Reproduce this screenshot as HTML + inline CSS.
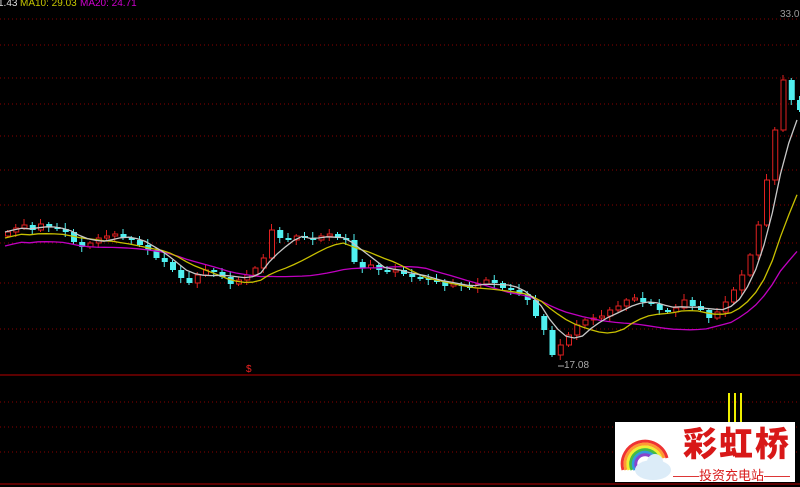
<!DOCTYPE html>
<html><head><meta charset="utf-8"><style>
html,body{margin:0;padding:0;background:#000;width:800px;height:487px;overflow:hidden;font-family:"Liberation Sans",sans-serif}
.t{position:absolute;font-size:10px;top:-2px}
#logo{position:absolute;left:615px;top:422px;width:180px;height:60px;background:#fff}
</style></head><body>
<svg id="s" width="800" height="487" style="position:absolute;left:0;top:0"></svg>
<div class="t" style="left:-2px;color:#ddd">1.43</div>
<div class="t" style="left:20px;color:#c8c800">MA10: 29.03</div>
<div class="t" style="left:80px;color:#d000d0">MA20: 24.71</div>
<div class="t" style="left:780px;top:9px;color:#999">33.0</div>
<div class="t" style="left:564px;top:360px;color:#aaa">17.08</div>
<div class="t" style="left:246px;top:364px;color:#e22">$</div>
<div id="logo">
<svg width="60" height="60" style="position:absolute;left:0;top:0">
<g fill="none" stroke-width="3">
<path d="M8 48 A22 22 0 1 1 52 36" stroke="#e33"/>
<path d="M11 48 A19 19 0 1 1 49 36" stroke="#f93"/>
<path d="M14 48 A16 16 0 1 1 46 36" stroke="#ee3"/>
<path d="M17 48 A13 13 0 1 1 43 36" stroke="#4b4"/>
<path d="M20 48 A10 10 0 1 1 40 36" stroke="#39d"/>
<path d="M23 48 A7 7 0 1 1 37 36" stroke="#84c"/>
</g>
<ellipse cx="38" cy="48" rx="18" ry="10" fill="#dcecf8"/>
<circle cx="40" cy="40" r="8" fill="#dcecf8"/>
</svg>
<div style="position:absolute;left:68px;top:0px;font:900 34px 'Noto Sans CJK SC',sans-serif;color:#d81818;letter-spacing:2px;line-height:40px">彩虹桥</div>
<div style="position:absolute;left:58px;top:43px;font:13px 'Liberation Sans','Noto Sans CJK SC',sans-serif;color:#d81818;white-space:nowrap">——投资充电站——</div>
</div>
<script>
(function(){
var s=document.getElementById('s'),NS='http://www.w3.org/2000/svg';
function el(t,a){var e=document.createElementNS(NS,t);for(var k in a)e.setAttribute(k,a[k]);s.appendChild(e);return e;}
var gl=[19,45,78,104,136,170,205,243,283,329,402,427,452];
gl.forEach(function(y){el('line',{x1:0,y1:y,x2:800,y2:y,stroke:'#8a0000','stroke-dasharray':'1,3'});});
el('line',{x1:0,y1:375,x2:800,y2:375,stroke:'#7a0000','stroke-width':1.5});
el('line',{x1:0,y1:484,x2:800,y2:484,stroke:'#7a0000','stroke-width':1.5});
var c=[232,228,225,230,224,227,229,232,242,247,243,238,236,234,238,240,245,250,258,262,270,278,283,275,270,272,277,284,280,275,268,258,230,238,240,236,238,240,236,234,238,240,262,268,265,270,272,270,274,277,278,280,282,286,284,286,288,284,280,283,288,290,294,300,316,330,355,345,335,325,320,318,316,310,306,300,298,302,304,310,312,308,300,306,310,318,312,302,290,275,255,225,180,130,80,100,110];
var n=c.length,dx=8.25;
function ma(k,off){var p='';for(var i=0;i<n;i++){var a=0,m=0;for(var j=Math.max(0,i-k+1);j<=i;j++){a+=c[j];m++;}a=a/m+(i<88?off:off*Math.max(0,(94-i)/6));p+=(i?'L':'M')+(5+i*dx).toFixed(1)+' '+a.toFixed(1);}return p;}
for(var i=0;i<n;i++){var x=5+i*dx,o=i?c[i-1]:c[0]+4,cl=c[i];var tp=Math.min(o,cl),bt=Math.max(o,cl);if(bt-tp<2)bt=tp+2;
var up=cl<o,col=up?'#e02020':'#50f0f0',w1=((i*7)%5)+2,w2=((i*3)%6)+2;
el('line',{x1:x+2.5,y1:tp-w1,x2:x+2.5,y2:bt+w2,stroke:col});
if(up)el('rect',{x:x+0.5,y:tp,width:5,height:bt-tp,fill:'#000',stroke:col});
else el('rect',{x:x,y:tp,width:6,height:bt-tp,fill:col});}
el('path',{d:ma(20,14),fill:'none',stroke:'#c000c0','stroke-width':1.3});
el('path',{d:ma(10,6),fill:'none',stroke:'#c8c000','stroke-width':1.3});
el('path',{d:ma(5,0),fill:'none',stroke:'#c8c8c8','stroke-width':1.3});
el('line',{x1:558,y1:366,x2:564,y2:366,stroke:'#aaa'});
[729,735,741].forEach(function(x){el('line',{x1:x,y1:393,x2:x,y2:422,stroke:'#ee0','stroke-width':2});});
})();
</script>
</body></html>
